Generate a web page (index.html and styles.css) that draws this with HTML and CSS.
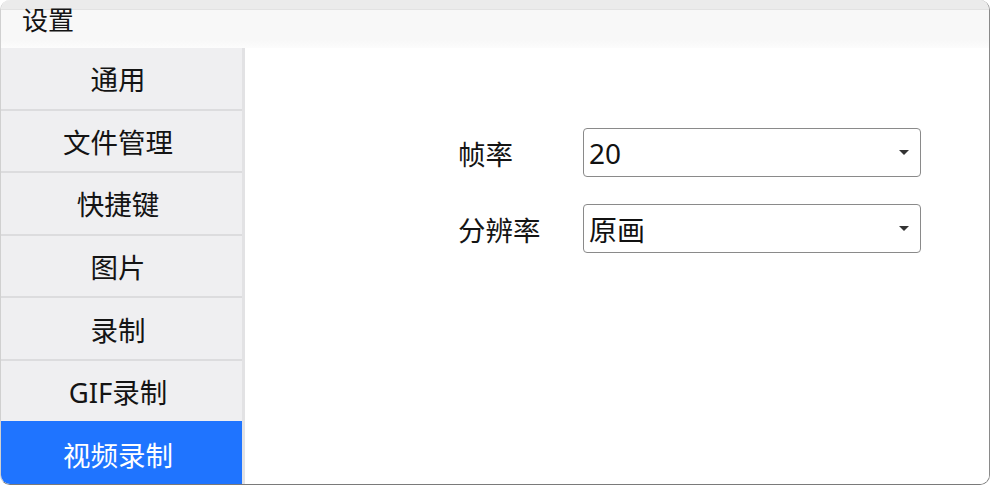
FILE: index.html
```html
<!DOCTYPE html>
<html lang="zh-CN">
<head>
<meta charset="utf-8">
<title>设置</title>
<link rel="stylesheet" href="styles.css">
</head>
<body>
<div class="window">
  <div class="topstrip"></div>
  <div class="titlebar"><span class="title">设置</span></div>
  <div class="main">
    <nav class="sidebar">
      <div class="nav-item">通用</div>
      <div class="nav-item">文件管理</div>
      <div class="nav-item">快捷键</div>
      <div class="nav-item">图片</div>
      <div class="nav-item">录制</div>
      <div class="nav-item">GIF录制</div>
      <div class="nav-item active">视频录制</div>
    </nav>
    <section class="content">
      <div class="form">
        <label class="label">帧率</label>
        <div class="select"><span class="value">20</span><span class="arrow"></span></div>
        <label class="label">分辨率</label>
        <div class="select"><span class="value">原画</span><span class="arrow"></span></div>
      </div>
    </section>
  </div>
</div>
</body>
</html>
```

FILE: styles.css
```css
html, body {
  margin: 0;
  padding: 0;
  background: #ffffff;
}

body {
  font-family: "Noto Sans", "Noto Sans CJK SC", sans-serif;
  color: #141414;
}

.window {
  width: 990px;
  height: 485px;
  box-sizing: border-box;
  border-right: 1.5px solid #8a8a8a;
  border-bottom: 1.5px solid #7a7a7a;
  border-left: 1px solid #d0d0d0;
  border-radius: 10px;
  overflow: hidden;
  display: flex;
  flex-direction: column;
  background: #ffffff;
}

.topstrip {
  height: 10px;
  flex: none;
  background: #ebebeb;
  border-bottom: 1px solid #e2e2e2;
  box-sizing: border-box;
}

.titlebar {
  height: 38px;
  flex: none;
  background: linear-gradient(#f8f8f8 0%, #f8f8f8 80%, #fcfcfc 100%);
  padding-left: 21px;
  box-sizing: border-box;
}

.title {
  display: block;
  font-size: 26px;
  line-height: 26px;
  margin-top: -3px;
  color: #141414;
}

.main {
  flex: 1;
  display: flex;
  min-height: 0;
}

.sidebar {
  width: 244px;
  flex: none;
  display: flex;
  flex-direction: column;
  background: #efeff1;
  border-right: 3px solid #e2e2e4;
  box-sizing: border-box;
}

.nav-item {
  flex: 1;
  display: flex;
  align-items: center;
  justify-content: center;
  padding-right: 7px;
  font-size: 27.5px;
  color: #141414;
  border-top: 2px solid #dcdcde;
}

.nav-item:first-child {
  border-top: none;
}

.nav-item.active {
  background: #1f74ff;
  color: #ffffff;
  border-top-color: #1f74ff;
}

.content {
  flex: 1;
  background: #ffffff;
}

.form {
  margin-top: 80px;
  margin-left: 213px;
  display: grid;
  grid-template-columns: 125px 338px;
  row-gap: 27px;
  align-items: center;
}

.label {
  font-size: 27.5px;
  color: #141414;
}

.select {
  height: 49px;
  box-sizing: border-box;
  border: 1.5px solid #8a8a8a;
  border-radius: 4px;
  display: flex;
  align-items: center;
  justify-content: space-between;
  padding: 0 11px 0 5px;
  background: #ffffff;
}

.value {
  font-size: 28px;
  color: #111111;
}

.arrow {
  width: 0;
  height: 0;
  border-left: 5px solid transparent;
  border-right: 5px solid transparent;
  border-top: 5px solid #333333;
}
```
